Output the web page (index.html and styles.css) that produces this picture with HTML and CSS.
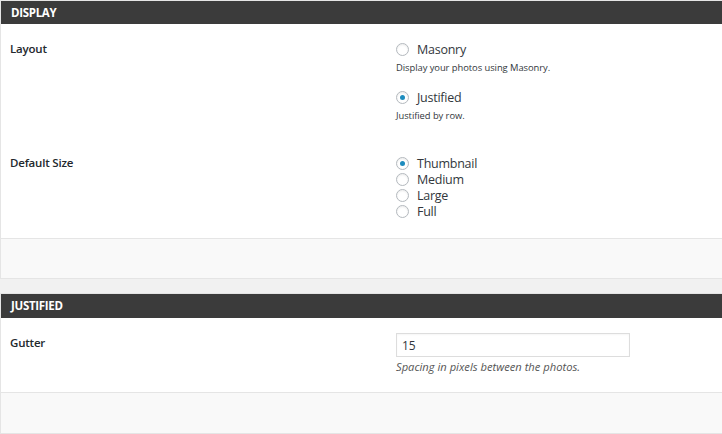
FILE: index.html
```html
<!DOCTYPE html>
<html>
<head>
<meta charset="utf-8">
<link rel="stylesheet" href="styles.css">
</head>
<body>
<section class="panel">
  <h2 class="panel-head">DISPLAY</h2>
  <div class="panel-body">
    <div class="row row-layout">
      <div class="label">Layout</div>
      <div class="control">
        <label class="opt"><span class="radio"></span>Masonry</label>
        <p class="hint hint-first">Display your photos using Masonry.</p>
        <label class="opt opt-second"><span class="radio checked"></span>Justified</label>
        <p class="hint">Justified by row.</p>
      </div>
    </div>
    <div class="row row-size">
      <div class="label">Default Size</div>
      <div class="control">
        <label class="opt"><span class="radio checked"></span>Thumbnail</label>
        <label class="opt"><span class="radio"></span>Medium</label>
        <label class="opt"><span class="radio"></span>Large</label>
        <label class="opt"><span class="radio"></span>Full</label>
      </div>
    </div>
  </div>
  <div class="panel-foot"></div>
</section>
<section class="panel panel-second">
  <h2 class="panel-head">JUSTIFIED</h2>
  <div class="panel-body">
    <div class="row row-gutter">
      <div class="label label-gutter">Gutter</div>
      <div class="control">
        <input class="text-input" type="text" value="15">
        <p class="desc">Spacing in pixels between the photos.</p>
      </div>
    </div>
  </div>
  <div class="panel-foot"></div>
</section>
</body>
</html>
```

FILE: styles.css
```css
html, body {
  margin: 0;
  padding: 0;
  background: #f1f1f1;
  font-family: "Open Sans", "Noto Sans", sans-serif;
  color: #23282d;
}

.panel {
  border-top: 1px solid #e5e5e5;
  border-left: 1px solid #e5e5e5;
  border-bottom: 1px solid #e5e5e5;
  background: #fff;
}

.panel-second {
  margin-top: 14px;
}

.panel-head {
  margin: 0;
  height: 23px;
  line-height: 23px;
  background: #3b3b3b;
  color: #fff;
  font-size: 11.5px;
  font-weight: 700;
  padding-left: 10px;
  letter-spacing: -0.3px;
}

.panel-second .panel-head {
  height: 24px;
  line-height: 24px;
}

.panel-body {
  background: #fff;
}

.row {
  display: grid;
  grid-template-columns: 395px 1fr;
}

.row-layout {
  padding-top: 17px;
}

.row-size {
  padding-top: 32px;
  padding-bottom: 19px;
}

.row-gutter {
  padding-top: 15px;
  padding-bottom: 18px;
}

.label {
  padding-left: 9px;
  font-size: 11.5px;
  font-weight: 600;
  line-height: 16px;
  letter-spacing: -0.2px;
}

.label-gutter {
  padding-top: 2px;
}

.control {
  display: flex;
  flex-direction: column;
  align-items: flex-start;
}

.opt {
  display: flex;
  align-items: center;
  height: 16px;
  font-size: 12.5px;
  color: #32373c;
  letter-spacing: -0.25px;
}

.opt-second {
  margin-top: 14px;
}

.radio {
  box-sizing: border-box;
  width: 13px;
  height: 13px;
  border: 1px solid #b4b9be;
  border-radius: 50%;
  background: #fff;
  margin-right: 8px;
  display: flex;
  align-items: center;
  justify-content: center;
  box-shadow: inset 0 1px 2px rgba(0, 0, 0, 0.08);
}

.radio.checked::after {
  content: "";
  width: 5px;
  height: 5px;
  border-radius: 50%;
  background: #1e8cbe;
}

.hint {
  margin: 4px 0 0;
  font-size: 9.4px;
  line-height: 14px;
  color: #32373c;
  letter-spacing: -0.05px;
}

.text-input {
  box-sizing: border-box;
  width: 234px;
  height: 24px;
  border: 1px solid #ddd;
  box-shadow: inset 0 1px 2px rgba(0, 0, 0, 0.04);
  padding: 0 5px;
  margin: 0;
  font-family: "Open Sans", "Noto Sans", sans-serif;
  font-size: 12px;
  color: #32373c;
  outline: none;
}

.desc {
  margin: 3px 0 0;
  font-size: 11.2px;
  line-height: 14px;
  font-style: italic;
  color: #555;
  letter-spacing: 0;
}

.panel-foot {
  height: 39px;
  background: #f9f9f9;
  border-top: 1px solid #e5e5e5;
}

.panel-second .panel-foot {
  height: 40px;
}
```
